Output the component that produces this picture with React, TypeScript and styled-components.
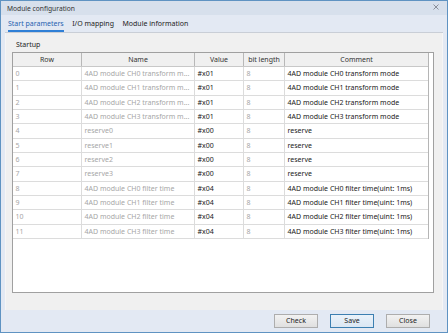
import styled, { createGlobalStyle } from "styled-components";

const GlobalStyle = createGlobalStyle`
  html, body {
    margin: 0;
    padding: 0;
    background: #e3e9f3;
  }
  body {
    font-family: "Noto Sans", "Noto Sans CJK SC", sans-serif;
  }
`;

type Param = {
  name: string;
  value: string;
  comment: string;
};

const params: Param[] = [
  { name: "4AD module CH0 transform m...", value: "#x01", comment: "4AD module CH0 transform mode" },
  { name: "4AD module CH1 transform m...", value: "#x01", comment: "4AD module CH1 transform mode" },
  { name: "4AD module CH2 transform m...", value: "#x01", comment: "4AD module CH2 transform mode" },
  { name: "4AD module CH3 transform m...", value: "#x01", comment: "4AD module CH3 transform mode" },
  { name: "reserve0", value: "#x00", comment: "reserve" },
  { name: "reserve1", value: "#x00", comment: "reserve" },
  { name: "reserve2", value: "#x00", comment: "reserve" },
  { name: "reserve3", value: "#x00", comment: "reserve" },
  { name: "4AD module CH0 filter time", value: "#x04", comment: "4AD module CH0 filter time(uint: 1ms)" },
  { name: "4AD module CH1 filter time", value: "#x04", comment: "4AD module CH1 filter time(uint: 1ms)" },
  { name: "4AD module CH2 filter time", value: "#x04", comment: "4AD module CH2 filter time(uint: 1ms)" },
  { name: "4AD module CH3 filter time", value: "#x04", comment: "4AD module CH3 filter time(uint: 1ms)" },
];

const tabs = ["Start parameters", "I/O mapping", "Module information"];

const App = (): JSX.Element => {
  return (
    <>
      <GlobalStyle />
      <Window>
        <TitleBar>
          <Title>Module configuration</Title>
          <CloseIcon width="6" height="6" viewBox="0 0 6 6">
            <path d="M0.5 0.5 L5.5 5.5 M5.5 0.5 L0.5 5.5" stroke="#8a8f99" strokeWidth="1" />
          </CloseIcon>
        </TitleBar>
        <TabBar>
          {tabs.map((t, i) => (
            <Tab key={t} $active={i === 0}>
              {t}
            </Tab>
          ))}
        </TabBar>
        <Panel>
          <GroupLabel>Startup</GroupLabel>
          <TableBox>
            <TableGrid>
              <HeaderRow>
                <HeaderCell>Row</HeaderCell>
                <HeaderCell>Name</HeaderCell>
                <HeaderCell>Value</HeaderCell>
                <HeaderCell>bit length</HeaderCell>
                <HeaderCell>Comment</HeaderCell>
              </HeaderRow>
              {params.map((p, i) => (
                <DataRow key={i}>
                  <Cell $muted>{i}</Cell>
                  <Cell $muted>{p.name}</Cell>
                  <Cell>{p.value}</Cell>
                  <Cell $muted>8</Cell>
                  <Cell>{p.comment}</Cell>
                </DataRow>
              ))}
            </TableGrid>
          </TableBox>
        </Panel>
        <Footer>
          <Button>Check</Button>
          <Button $focused>Save</Button>
          <Button>Close</Button>
        </Footer>
      </Window>
    </>
  );
};

export default App;

const Window = styled.div`
  width: 448px;
  height: 333px;
  box-sizing: border-box;
  border: 1px solid #5f93c2;
  background: #e3e9f3;
  display: flex;
  flex-direction: column;
  overflow: hidden;
`;

const TitleBar = styled.div`
  height: 14px;
  display: flex;
  align-items: center;
  justify-content: space-between;
  padding: 0 8px 0 6px;
  background: #d7e0ec;
`;

const Title = styled.div`
  font-size: 6.7px;
  color: #333333;
`;

const CloseIcon = styled.svg`
  display: block;
  margin-top: -2px;
`;

const TabBar = styled.div`
  height: 17px;
  display: flex;
  align-items: stretch;
  gap: 8.5px;
  padding: 0 0 0 3px;
  margin: 0 4px;
  border-bottom: 1px solid #c9ced6;
  background: #e3e9f3;
`;

const Tab = styled.div<{ $active?: boolean }>`
  font-size: 7px;
  color: ${(p) => (p.$active ? "#1f62b0" : "#222222")};
  display: flex;
  align-items: center;
  padding-top: 1px;
  box-sizing: border-box;
  border-bottom: 2px solid ${(p) => (p.$active ? "#2f7fd6" : "transparent")};
`;

const Panel = styled.div`
  flex: 1;
  margin: 0 4px;
  background: #f0f0f0;
  border-left: 1px solid #f6f6f6;
  border-right: 1px solid #f6f6f6;
  padding: 4px 8px 17px 6px;
  display: flex;
  flex-direction: column;
`;

const GroupLabel = styled.div`
  font-size: 7px;
  color: #222222;
  height: 15px;
  line-height: 15px;
  padding-left: 4px;
`;

const TableBox = styled.div`
  flex: 1;
  background: #ffffff;
  border: 1px solid #a0a0a0;
  padding-right: 5px;
`;

const TableGrid = styled.div`
  display: flex;
  flex-direction: column;
  width: 415px;
  border-right: 1px solid #b5b5b5;
`;

const rowColumns = `69px 113px 49px 41px 143px`;

const HeaderRow = styled.div`
  display: grid;
  grid-template-columns: ${rowColumns};
  height: 13px;
  background: #f0f0f0;
  border-bottom: 1px solid #c8c8c8;
`;

const HeaderCell = styled.div`
  font-size: 7px;
  color: #333333;
  text-align: center;
  line-height: 13px;
  border-right: 1px solid #b8b8b8;
  &:last-child {
    border-right: none;
  }
`;

const DataRow = styled.div`
  display: grid;
  grid-template-columns: ${rowColumns};
  height: 14.33px;
  box-sizing: border-box;
  border-bottom: 1px solid #dcdcdc;
`;

const Cell = styled.div<{ $muted?: boolean }>`
  font-size: 7px;
  line-height: 13.33px;
  padding-left: 2.5px;
  white-space: nowrap;
  overflow: hidden;
  color: ${(p) => (p.$muted ? "#a6a6a6" : "#1a1a1a")};
  border-right: 1px solid #dcdcdc;
  &:last-child {
    border-right: none;
  }
`;

const Footer = styled.div`
  height: 22px;
  display: flex;
  align-items: center;
  justify-content: flex-end;
  gap: 12px;
  padding-right: 17px;
  background: #e3e9f3;
`;

const Button = styled.button<{ $focused?: boolean }>`
  width: 44px;
  height: 14px;
  padding: 0;
  font-family: "Noto Sans", sans-serif;
  font-size: 7px;
  color: #222222;
  border: 1px solid ${(p) => (p.$focused ? "#3c7fb1" : "#adadad")};
  background: ${(p) =>
    p.$focused
      ? "linear-gradient(#eaf2fa, #dbe7f3)"
      : "linear-gradient(#f2f2f2, #e0e0e0)"};
  line-height: 12px;
`;
